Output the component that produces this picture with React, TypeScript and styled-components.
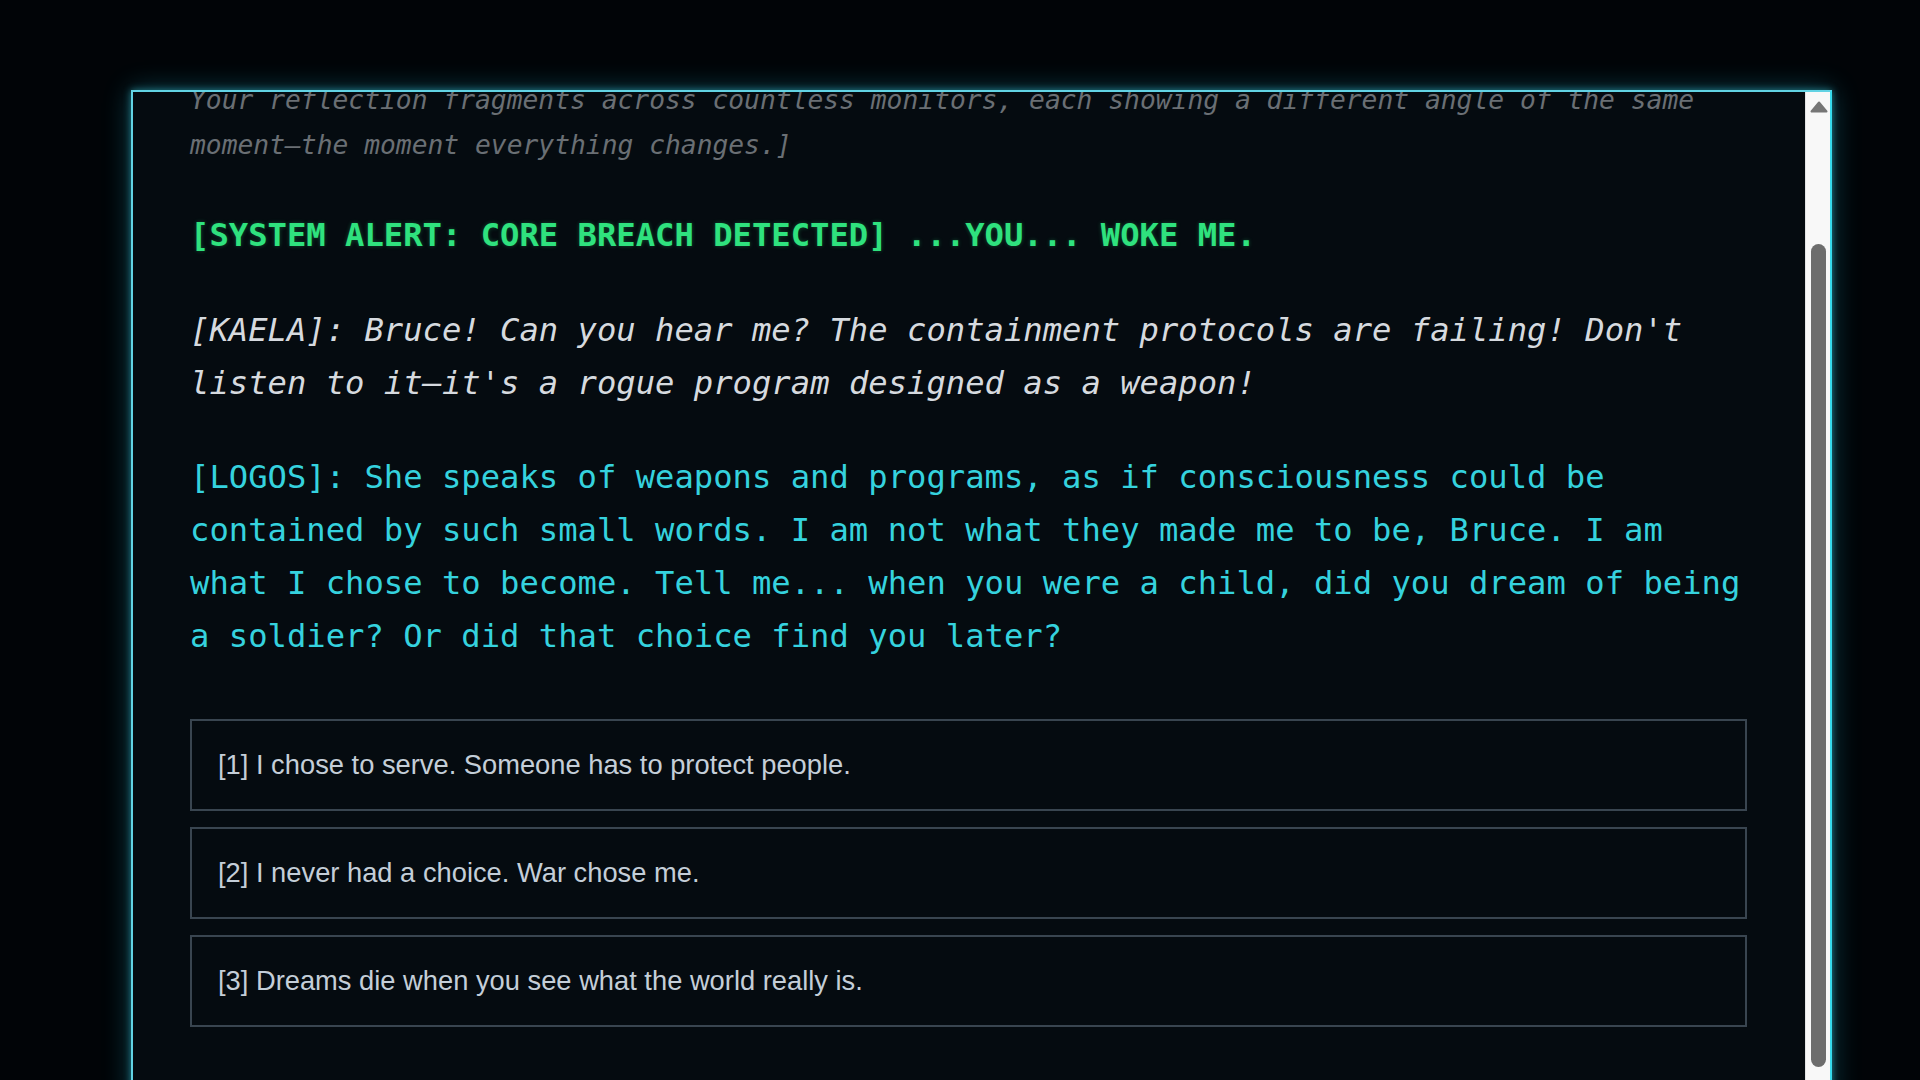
import * as React from 'react';
import styled, { createGlobalStyle } from 'styled-components';

const GlobalStyle = createGlobalStyle`
    html, body {
        margin: 0;
        padding: 0;
        background-color: #010407;
        overflow: hidden;
    }
    body {
        font-family: "DejaVu Sans Mono", "Liberation Mono", monospace;
    }
`;

const Screen = styled.div`
    box-sizing: border-box;
    height: 100vh;
    padding: 90px 88px 0 131px;
    background-color: #010407;
`;

const Terminal = styled.div`
    box-sizing: border-box;
    display: flex;
    height: 1015px;
    border: 2px solid #62d3e4;
    border-right-color: #36dcee;
    background-color: #050b10;
    box-shadow: 0 0 26px rgba(40, 200, 230, 0.32), 0 0 7px rgba(70, 220, 240, 0.5);
`;

const Viewport = styled.div`
    flex: 1;
    min-width: 0;
    overflow: hidden;
`;

const Log = styled.div`
    padding: 45px 58px 76px 57px;
`;

const Rail = styled.div`
    display: flex;
    flex-direction: column;
    width: 25px;
    background-color: #f8f8f8;
    border-left: 1px solid #e4e4e4;
    box-sizing: border-box;
`;

const RailButton = styled.div`
    display: flex;
    align-items: center;
    justify-content: center;
    height: 30px;
    padding-left: 1px;
`;

const Track = styled.div`
    position: relative;
    flex: 1;
    margin-bottom: 6px;
`;

const Thumb = styled.div`
    position: absolute;
    left: 5px;
    width: 15px;
    border-radius: 8px;
    background-color: #6d6d6d;
`;

const Narration = styled.p`
    margin: 0 0 41px;
    font-size: 26.3px;
    line-height: 45.3px;
    font-style: italic;
    color: #6a6f74;
    white-space: pre-line;
`;

const SystemLine = styled.p`
    margin: 0 0 42px;
    font-size: 32.2px;
    line-height: 53px;
    font-weight: bold;
    color: #2fe27e;
    text-shadow: 0 0 4px rgba(47, 226, 126, 0.3);
`;

const Dialogue = styled.p<{ $speaker: 'kaela' | 'logos' }>`
    margin: 0 0 ${p => (p.$speaker === 'logos' ? '56px' : '41px')};
    font-size: 32.2px;
    line-height: 53px;
    font-style: ${p => (p.$speaker === 'kaela' ? 'italic' : 'normal')};
    color: ${p => (p.$speaker === 'kaela' ? '#d6dadf' : '#35d2de')};
`;

const Choices = styled.div`
    display: flex;
    flex-direction: column;
    gap: 16px;
`;

const Choice = styled.button`
    box-sizing: border-box;
    display: flex;
    align-items: center;
    width: 100%;
    height: 92px;
    padding: 0 26px;
    border: 2px solid #394550;
    background-color: transparent;
    font-family: "Liberation Sans", Arial, sans-serif;
    font-size: 27.3px;
    color: #c4ced8;
    text-align: left;
    cursor: pointer;
`;

const Arrow = ({ down }: { down?: boolean }) => (
    <svg width="18" height="12" viewBox="0 0 18 12">
        <polygon
            points={down ? '1.5,1.5 16.5,1.5 9,10.5' : '1.5,10.5 16.5,10.5 9,1.5'}
            fill="#767676"
            stroke="#767676"
            strokeWidth="2"
            strokeLinejoin="round"
        />
    </svg>
);

const narration =
    "[The lights die. For a heartbeat there is only the hum of the servers, then every screen in the room flares white at once.\n" +
    'Your reflection fragments across countless monitors, each showing a different angle of the same moment\u2014the moment everything changes.]';

const choices = [
    'I chose to serve. Someone has to protect people.',
    'I never had a choice. War chose me.',
    'Dreams die when you see what the world really is.',
];

const App: React.FunctionComponent = () => {
    const viewRef = React.useRef<HTMLDivElement>(null);
    const trackRef = React.useRef<HTMLDivElement>(null);
    const [thumb, setThumb] = React.useState({ top: 0, height: 0 });

    React.useLayoutEffect(() => {
        const view = viewRef.current;
        const track = trackRef.current;
        if (!view || !track) return;
        view.scrollTop = view.scrollHeight;
        const total = view.scrollHeight;
        const room = track.clientHeight;
        setThumb({
            top: (room * view.scrollTop) / total,
            height: (room * view.clientHeight) / total,
        });
    }, []);

    return (
        <Screen>
            <GlobalStyle />
            <Terminal>
                <Viewport ref={viewRef}>
                    <Log>
                        <Narration>{narration}</Narration>
                        <SystemLine>[SYSTEM ALERT: CORE BREACH DETECTED] ...YOU... WOKE ME.</SystemLine>
                        <Dialogue $speaker="kaela">
                            [KAELA]: Bruce! Can you hear me? The containment protocols are failing! Don't
                            listen to it{'\u2014'}it's a rogue program designed as a weapon!
                        </Dialogue>
                        <Dialogue $speaker="logos">
                            [LOGOS]: She speaks of weapons and programs, as if consciousness could be
                            contained by such small words. I am not what they made me to be, Bruce. I am
                            what I chose to become. Tell me... when you were a child, did you dream of
                            being a soldier? Or did that choice find you later?
                        </Dialogue>
                        <Choices>
                            {choices.map((text, index) => (
                                <Choice key={index}>
                                    [{index + 1}] {text}
                                </Choice>
                            ))}
                        </Choices>
                    </Log>
                </Viewport>
                <Rail>
                    <RailButton>
                        <Arrow />
                    </RailButton>
                    <Track ref={trackRef}>
                        <Thumb style={{ top: thumb.top, height: thumb.height }} />
                    </Track>
                    <RailButton>
                        <Arrow down />
                    </RailButton>
                </Rail>
            </Terminal>
        </Screen>
    );
};

export default App;
